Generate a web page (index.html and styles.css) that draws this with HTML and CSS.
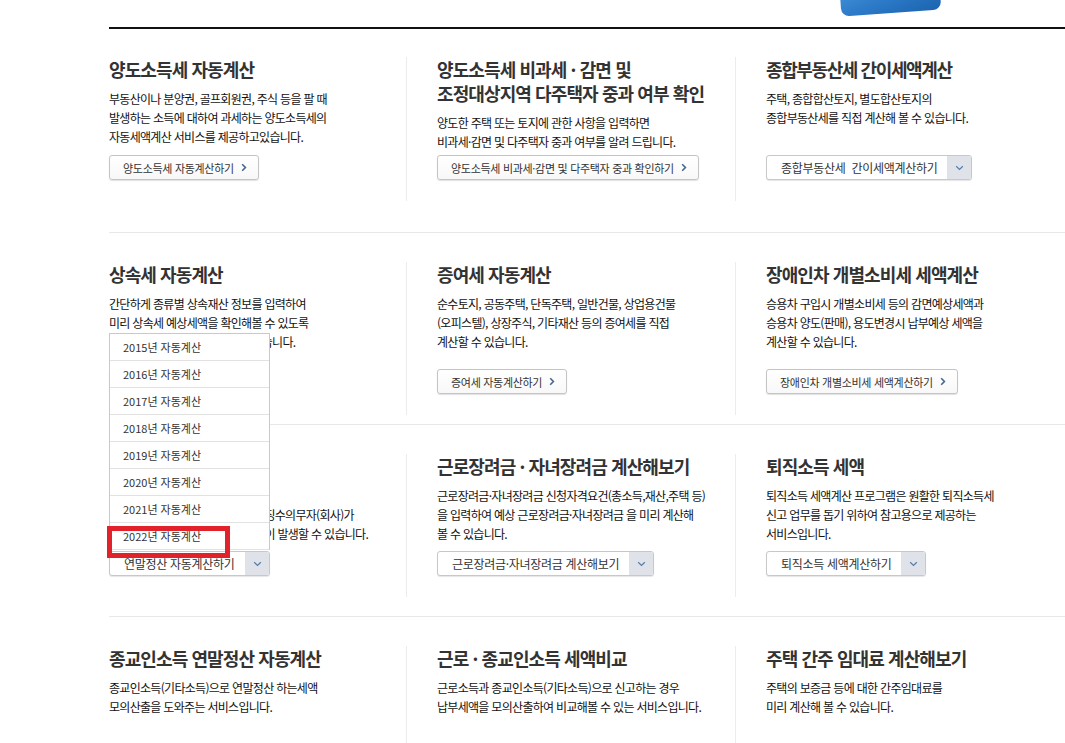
FILE: index.html
```html
<!DOCTYPE html>
<html lang="ko">
<head>
    <meta charset="UTF-8">
    <meta name="viewport" content="width=device-width, initial-scale=1.0">
    <title>세금 자동계산</title>
    <link rel="stylesheet" href="styles.css">
</head>
<body>
    <div class="page">
        <div class="top-bar">
            <span class="top-badge"></span>
        </div>

        <!-- row 1 -->
        <div class="calc-row row-1">
            <div class="calc-card">
                <h3 class="calc-title">양도소득세 자동계산</h3>
                <p class="calc-desc">부동산이나 분양권, 골프회원권, 주식 등을 팔 때<br>발생하는 소득에 대하여 과세하는 양도소득세의<br>자동세액계산 서비스를 제공하고있습니다.</p>
                <a href="#" class="btn-link">양도소득세 자동계산하기
                    <svg width="6" height="9" viewBox="0 0 6 9"><polyline points="1.2,1.2 4.4,4.5 1.2,7.8" /></svg>
                </a>
            </div>
            <div class="calc-card">
                <h3 class="calc-title">양도소득세 비과세 · 감면 및<br>조정대상지역 다주택자 중과 여부 확인</h3>
                <p class="calc-desc">양도한 주택 또는 토지에 관한 사항을 입력하면<br>비과세·감면 및 다주택자 중과 여부를 알려 드립니다.</p>
                <a href="#" class="btn-link">양도소득세 비과세·감면 및 다주택자 중과 확인하기
                    <svg width="6" height="9" viewBox="0 0 6 9"><polyline points="1.2,1.2 4.4,4.5 1.2,7.8" /></svg>
                </a>
            </div>
            <div class="calc-card">
                <h3 class="calc-title tight">종합부동산세 간이세액계산</h3>
                <p class="calc-desc">주택, 종합합산토지, 별도합산토지의<br>종합부동산세를 직접 계산해 볼 수 있습니다.</p>
                <div class="btn-select">
                    <span class="btn-select-text">종합부동산세&nbsp; 간이세액계산하기</span>
                    <span class="btn-select-arrow">
                        <svg width="9" height="6" viewBox="0 0 9 6"><polyline points="1.2,1.2 4.5,4.4 7.8,1.2" /></svg>
                    </span>
                </div>
            </div>
        </div>

        <!-- row 2 -->
        <div class="calc-row row-2">
            <div class="calc-card">
                <h3 class="calc-title">상속세 자동계산</h3>
                <p class="calc-desc">간단하게 종류별 상속재산 정보를 입력하여<br>미리 상속세 예상세액을 확인해볼 수 있도록<br>도와드리는 서비스를 제공하고 있습니다.</p>
                <a href="#" class="btn-link">상속세 자동계산하기
                    <svg width="6" height="9" viewBox="0 0 6 9"><polyline points="1.2,1.2 4.4,4.5 1.2,7.8" /></svg>
                </a>
            </div>
            <div class="calc-card">
                <h3 class="calc-title">증여세 자동계산</h3>
                <p class="calc-desc">순수토지, 공동주택, 단독주택, 일반건물, 상업용건물<br>(오피스텔), 상장주식, 기타재산 등의 증여세를 직접<br>계산할 수 있습니다.</p>
                <a href="#" class="btn-link">증여세 자동계산하기
                    <svg width="6" height="9" viewBox="0 0 6 9"><polyline points="1.2,1.2 4.4,4.5 1.2,7.8" /></svg>
                </a>
            </div>
            <div class="calc-card">
                <h3 class="calc-title">장애인차 개별소비세 세액계산</h3>
                <p class="calc-desc">승용차 구입시 개별소비세 등의 감면예상세액과<br>승용차 양도(판매), 용도변경시 납부예상 세액을<br>계산할 수 있습니다.</p>
                <a href="#" class="btn-link">장애인차 개별소비세 세액계산하기
                    <svg width="6" height="9" viewBox="0 0 6 9"><polyline points="1.2,1.2 4.4,4.5 1.2,7.8" /></svg>
                </a>
            </div>
        </div>

        <!-- row 3 -->
        <div class="calc-row row-3">
            <div class="calc-card">
                <h3 class="calc-title">연말정산 자동계산</h3>
                <p class="calc-desc">근로소득 연말정산 세액을<br>미리 계산해 보시고 근로자와 원천징수의무자(회사)가<br>연말정산 후 추가로 납부하실 세액이 발생할 수 있습니다.</p>
                <div class="select-wrap">
                    <ul class="year-list">
                        <li>2015년 자동계산</li>
                        <li>2016년 자동계산</li>
                        <li>2017년 자동계산</li>
                        <li>2018년 자동계산</li>
                        <li>2019년 자동계산</li>
                        <li>2020년 자동계산</li>
                        <li>2021년 자동계산</li>
                        <li class="is-marked">2022년 자동계산</li>
                    </ul>
                    <div class="btn-select">
                        <span class="btn-select-text">연말정산 자동계산하기</span>
                        <span class="btn-select-arrow">
                            <svg width="9" height="6" viewBox="0 0 9 6"><polyline points="1.2,1.2 4.5,4.4 7.8,1.2" /></svg>
                        </span>
                    </div>
                </div>
            </div>
            <div class="calc-card">
                <h3 class="calc-title">근로장려금 · 자녀장려금 계산해보기</h3>
                <p class="calc-desc">근로장려금·자녀장려금 신청자격요건(총소득,재산,주택 등)<br>을 입력하여 예상 근로장려금·자녀장려금 을 미리 계산해<br>볼 수 있습니다.</p>
                <div class="btn-select">
                    <span class="btn-select-text">근로장려금·자녀장려금 계산해보기</span>
                    <span class="btn-select-arrow">
                        <svg width="9" height="6" viewBox="0 0 9 6"><polyline points="1.2,1.2 4.5,4.4 7.8,1.2" /></svg>
                    </span>
                </div>
            </div>
            <div class="calc-card">
                <h3 class="calc-title">퇴직소득 세액</h3>
                <p class="calc-desc">퇴직소득 세액계산 프로그램은 원활한 퇴직소득세<br>신고 업무를 돕기 위하여 참고용으로 제공하는<br>서비스입니다.</p>
                <div class="btn-select">
                    <span class="btn-select-text">퇴직소득 세액계산하기</span>
                    <span class="btn-select-arrow">
                        <svg width="9" height="6" viewBox="0 0 9 6"><polyline points="1.2,1.2 4.5,4.4 7.8,1.2" /></svg>
                    </span>
                </div>
            </div>
        </div>

        <!-- row 4 -->
        <div class="calc-row row-4">
            <div class="calc-card">
                <h3 class="calc-title">종교인소득 연말정산 자동계산</h3>
                <p class="calc-desc">종교인소득(기타소득)으로 연말정산 하는세액<br>모의산출을 도와주는 서비스입니다.</p>
            </div>
            <div class="calc-card">
                <h3 class="calc-title">근로 · 종교인소득 세액비교</h3>
                <p class="calc-desc">근로소득과 종교인소득(기타소득)으로 신고하는 경우<br>납부세액을 모의산출하여 비교해볼 수 있는 서비스입니다.</p>
            </div>
            <div class="calc-card">
                <h3 class="calc-title">주택 간주 임대료 계산해보기</h3>
                <p class="calc-desc">주택의 보증금 등에 대한 간주임대료를<br>미리 계산해 볼 수 있습니다.</p>
            </div>
        </div>
    </div>
</body>
</html>
```

FILE: styles.css
```css
* {
    margin: 0;
    padding: 0;
    box-sizing: border-box;
}

body {
    background: #fff;
    color: #222;
    font-family: "Noto Sans CJK KR", "Noto Sans", sans-serif;
    overflow: hidden;
}

.page {
    width: 956px;
    margin-left: 109px;
}

/* top header edge */
.top-bar {
    position: relative;
    height: 29px;
    border-bottom: 2px solid #111;
}

.top-badge {
    position: absolute;
    left: 731px;
    top: -27px;
    width: 100px;
    height: 40px;
    border-radius: 8px;
    background: linear-gradient(160deg, #4d9be0 0%, #2a78c6 60%, #1c63ad 100%);
    transform: rotate(-4deg);
}

/* rows of calculators */
.calc-row {
    display: grid;
    grid-template-columns: 297px 329px 330px;
    padding-top: 28px;
    border-bottom: 1px solid #e8e8e8;
}

.row-1 { padding-bottom: 31px; }
.row-2 { padding-top: 29px; padding-bottom: 9px; }
.row-3 { padding-top: 29px; padding-bottom: 19px; }
.row-4 { padding-top: 29px; border-bottom: none; }

.row-1 .calc-card { height: 144px; }
.row-2 .calc-card { height: 153px; }
.row-3 .calc-card { height: 143px; }
.row-4 .calc-card { height: 97px; }

.calc-card {
    display: flex;
    flex-direction: column;
    align-items: flex-start;
    padding-bottom: 21px;
}

.calc-card + .calc-card {
    border-left: 1px solid #ececec;
    padding-left: 30px;
}

.calc-title {
    font-size: 18px;
    font-weight: 700;
    line-height: 24px;
    letter-spacing: -0.9px;
    color: #333;
    white-space: nowrap;
    margin-bottom: 8px;
}

.calc-title.tight {
    letter-spacing: -1.4px;
}

.calc-desc {
    font-size: 12px;
    line-height: 19px;
    letter-spacing: -0.7px;
    color: #111;
    white-space: nowrap;
}

/* plain link button */
.btn-link {
    display: inline-flex;
    align-items: center;
    gap: 7px;
    height: 25px;
    margin-top: auto;
    padding: 0 11px 0 13px;
    border: 1px solid #c4c4c4;
    border-radius: 3px;
    background: linear-gradient(#fff, #f8f8f8);
    box-shadow: 0 1px 1px rgba(0,0,0,0.12);
    color: #333;
    font-size: 11px;
    letter-spacing: -0.3px;
    text-decoration: none;
    white-space: nowrap;
}

.btn-link svg polyline {
    fill: none;
    stroke: #46678f;
    stroke-width: 1.6;
}

/* select-like button */
.btn-select {
    display: inline-flex;
    height: 25px;
    margin-top: auto;
    border: 1px solid #c8c8c8;
    border-radius: 3px;
    background: #fff;
    box-shadow: 0 1px 1px rgba(0,0,0,0.1);
    overflow: hidden;
}

.btn-select-text {
    display: flex;
    align-items: center;
    padding: 0 10px 0 14px;
    color: #333;
    font-size: 12px;
    letter-spacing: -0.3px;
    white-space: nowrap;
}

.btn-select-arrow {
    display: flex;
    align-items: center;
    justify-content: center;
    width: 24px;
    background: #dfe3e9;
}

.btn-select-arrow polyline {
    fill: none;
    stroke: #5a7dab;
    stroke-width: 1.3;
}

.select-wrap {
    position: relative;
    margin-top: auto;
}

.select-wrap .btn-select {
    width: 161px;
}

.select-wrap .btn-select-text {
    flex: 1;
}

/* opened year list */
.year-list {
    position: absolute;
    left: 0;
    bottom: 100%;
    width: 161px;
    list-style: none;
    background: #fff;
    border: 1px solid #c9c9c9;
    border-bottom: none;
    z-index: 5;
}

.year-list li {
    position: relative;
    height: 27px;
    line-height: 26px;
    padding-left: 13px;
    border-bottom: 1px solid #e2e2e2;
    color: #333;
    font-size: 11px;
}

.year-list li.is-marked::after {
    content: "";
    position: absolute;
    left: -3px;
    top: 3px;
    width: 113px;
    height: 22px;
    border: 5px solid #e1222b;
}
```
